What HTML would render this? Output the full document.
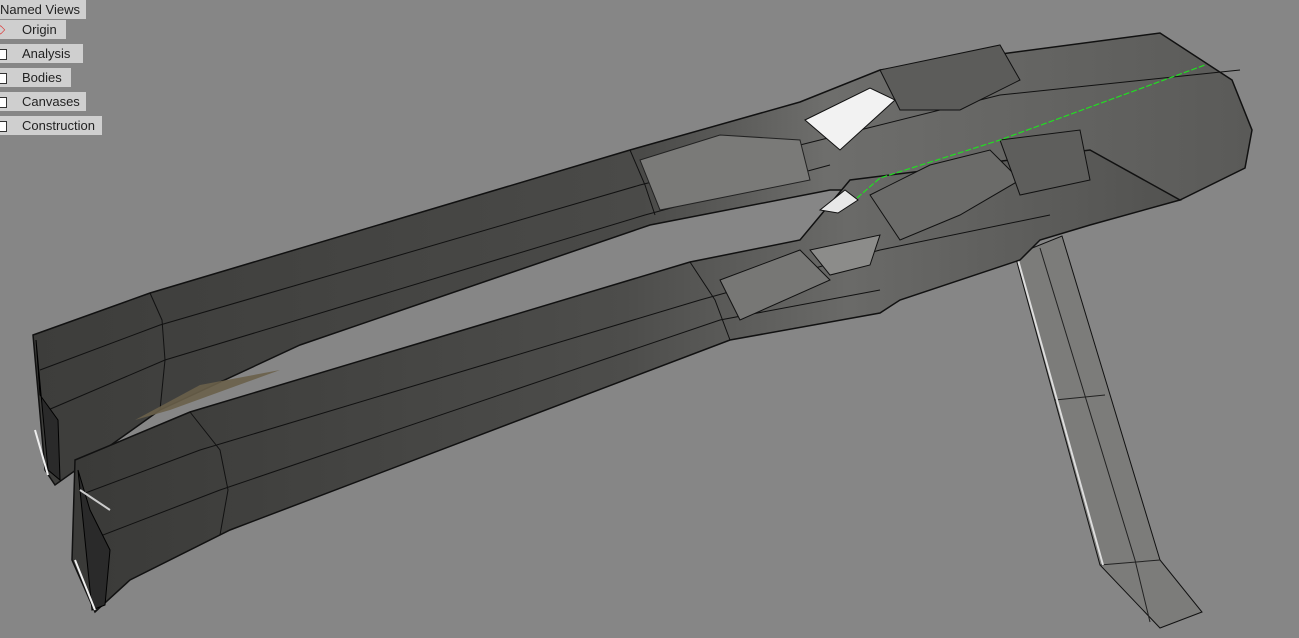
<!DOCTYPE html>
<html><head><meta charset="utf-8"><style>
html,body{margin:0;padding:0;width:1299px;height:638px;overflow:hidden;background:#868686;font-family:"Liberation Sans",sans-serif}
.b{position:absolute;left:0;background:#cfcfcf;font-size:13px;color:#222;height:19px;line-height:19px}
.cb{position:absolute;left:-4px;top:5px;width:9px;height:9px;border:1px solid #333;background:#fff}
</style></head><body>
<svg width="1299" height="638" style="position:absolute;left:0;top:0">
<defs>
<linearGradient id="g1" x1="0" y1="0" x2="1" y2="0">
<stop offset="0" stop-color="#3d3d3b"/><stop offset="0.5" stop-color="#4a4a48"/><stop offset="0.65" stop-color="#6e6e6c"/><stop offset="1" stop-color="#5a5a58"/></linearGradient>
<linearGradient id="g2" x1="0" y1="0" x2="1" y2="0">
<stop offset="0" stop-color="#3a3a38"/><stop offset="0.5" stop-color="#4d4d4b"/><stop offset="0.7" stop-color="#6a6a68"/><stop offset="1" stop-color="#525250"/></linearGradient>
</defs>
<!-- leg -->
<polygon points="1015,255 1062,236 1160,560 1202,612 1160,628 1100,565" fill="#7c7c7a" stroke="#111" stroke-width="1"/>
<polyline points="1040,248 1135,560 1150,622" fill="none" stroke="#222"/>
<line x1="1055" y1="400" x2="1105" y2="395" stroke="#222"/>
<line x1="1100" y1="565" x2="1160" y2="560" stroke="#222"/>
<line x1="1018" y1="260" x2="1103" y2="565" stroke="#ddd" stroke-width="2"/>
<!-- upper tube -->
<polygon points="33,335 150,293 630,150 800,102 880,70 1160,33 1232,80 1252,130 1245,168 1180,200 900,190 830,190 650,225 300,345 160,410 55,485 45,470" fill="url(#g1)" stroke="#111" stroke-width="1.5"/>
<polyline points="40,370 160,325 640,185 820,140 1000,95 1240,70" fill="none" stroke="#111"/>
<polyline points="48,410 165,360 645,215 830,165" fill="none" stroke="#111"/>
<polyline points="150,293 162,320 165,360 160,410" fill="none" stroke="#111"/>
<polyline points="630,150 645,185 655,215" fill="none" stroke="#111"/>
<!-- lower tube -->
<polygon points="75,460 190,412 690,262 800,240 850,180 1090,150 1180,200 1090,225 1040,240 1020,260 900,300 880,313 730,340 230,530 130,580 95,612 72,560" fill="url(#g2)" stroke="#111" stroke-width="1.5"/>
<polyline points="80,495 200,450 700,300 880,250 1050,215" fill="none" stroke="#111"/>
<polyline points="90,540 220,490 720,320 880,290" fill="none" stroke="#111"/>
<polyline points="190,412 220,450 228,490 220,535" fill="none" stroke="#111"/>
<polyline points="690,262 715,300 730,340" fill="none" stroke="#111"/>
<polygon points="810,250 880,235 870,265 830,275" fill="#8c8c8a" stroke="#111"/>
<polygon points="720,280 800,250 830,280 740,320" fill="#777775" stroke="#111"/>
<!-- right body faces -->
<polygon points="880,70 1000,45 1020,80 960,110 900,110" fill="#5c5c5a" stroke="#111"/>
<polygon points="870,195 930,165 990,150 1020,180 960,215 900,240" fill="#6b6b69" stroke="#111"/>
<polygon points="1000,140 1080,130 1090,180 1020,195" fill="#5e5e5c" stroke="#111"/>
<polygon points="640,160 720,135 800,140 810,180 660,210" fill="#7a7a78" stroke="#222"/>
<!-- white patch -->
<polygon points="805,120 870,88 895,100 840,150" fill="#f2f2f2" stroke="#111"/>
<polygon points="820,210 845,190 858,200 838,213" fill="#e8e8e8" stroke="#111"/>
<!-- yellow -->
<polygon points="135,420 200,385 280,370 170,410" fill="#6a604a" opacity="0.9"/>
<!-- openings -->
<polygon points="36,340 48,470 60,480 58,420 40,395" fill="#2a2a2a" stroke="#000"/>
<line x1="35" y1="430" x2="48" y2="475" stroke="#eee" stroke-width="2"/>
<polygon points="78,470 92,610 105,605 110,550 90,510" fill="#2a2a2a" stroke="#000"/>
<line x1="75" y1="560" x2="95" y2="610" stroke="#eee" stroke-width="2"/>
<line x1="80" y1="490" x2="110" y2="510" stroke="#ccc" stroke-width="2"/>
<!-- green line -->
<polyline points="857,198 880,178 1000,140 1205,65" fill="none" stroke="#22dd22" stroke-width="1.2" stroke-dasharray="6,2"/>
</svg>
<div class="b" style="top:0;width:86px;padding-left:0">Named Views</div>
<div class="b" style="top:20px;width:66px"><span style="position:absolute;left:-4px;color:#d33;font-size:12px">◇</span><span style="margin-left:22px">Origin</span></div>
<div class="b" style="top:44px;width:83px"><span class="cb"></span><span style="margin-left:22px">Analysis</span></div>
<div class="b" style="top:68px;width:71px"><span class="cb"></span><span style="margin-left:22px">Bodies</span></div>
<div class="b" style="top:92px;width:86px"><span class="cb"></span><span style="margin-left:22px">Canvases</span></div>
<div class="b" style="top:116px;width:102px"><span class="cb"></span><span style="margin-left:22px">Construction</span></div>
</body></html>
